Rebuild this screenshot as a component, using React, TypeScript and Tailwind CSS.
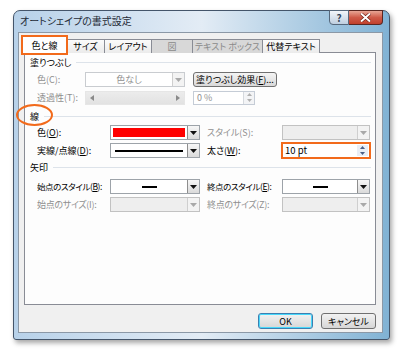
import React from "react";

const U = ({ children }: { children: React.ReactNode }) => <span className="underline underline-offset-1">{children}</span>;

const Tri = ({ color = "#000", up = false, w = 7, h = 4 }: { color?: string; up?: boolean; w?: number; h?: number }) => (
  <svg width={w} height={h} viewBox="0 0 7 4">
    <path d={up ? "M0 4H7L3.5 0Z" : "M0 0H7L3.5 4Z"} fill={color} />
  </svg>
);

function DropBtn({ disabled }: { disabled?: boolean }) {
  return (
    <div
      className={
        disabled
          ? "w-[12px] h-full flex items-center justify-center border-l border-[#cfcfcf] bg-[#f3f3f3]"
          : "w-[12px] h-full flex items-center justify-center border-l border-[#8e8e8e] bg-gradient-to-b from-[#f7f7f7] to-[#dadada]"
      }
    >
      <Tri color={disabled ? "#a9a9a9" : "#111"} />
    </div>
  );
}

function Combo({ w, disabled, children, grayBg }: { w: string; disabled?: boolean; children?: React.ReactNode; grayBg?: boolean }) {
  return (
    <div
      className={
        (grayBg
          ? "bg-[#eeeeee] border-[#c2c2c2] "
          : disabled
          ? "bg-white border-[#c9ccd0] "
          : "bg-white border-[#9da3a9] ") +
        w +
        " h-[15px] border flex items-stretch"
      }
    >
      <div className="flex-1 flex items-center justify-center min-w-0 px-[2px]">{children}</div>
      <DropBtn disabled={disabled || grayBg} />
    </div>
  );
}

function Header({ children, ellipse }: { children: React.ReactNode; ellipse?: boolean }) {
  return (
    <div className="relative flex items-center h-[12px] pl-[5px] text-black">
      <span>{children}</span>
      <div className="flex-1 h-px bg-[#dde3ea] ml-[5px] mr-[4px]" />
      {ellipse && (
        <div className="absolute left-[-9px] top-[-6px] w-[37px] h-[22px] rounded-[50%] border-[2.5px] border-[#f26a1b]" />
      )}
    </div>
  );
}

function Tab({ label, w, selected, disabled }: { label: string; w: string; selected?: boolean; disabled?: boolean }) {
  if (selected) {
    return (
      <div className={w + " relative h-[17px] bg-white border border-b-0 border-[#898c95] flex items-center justify-center text-black z-10"}>
        {label}
        <div className="absolute left-[-2px] top-[-2px] w-[47px] h-[20px] border-2 border-[#f26a1b]" />
      </div>
    );
  }
  return (
    <div
      className={
        w +
        (disabled
          ? " h-[14px] bg-[#d8d8d8] text-[#8a8a8a] "
          : " h-[14px] bg-gradient-to-b from-[#fbfbfb] to-[#ebebeb] text-black ") +
        "border border-b-0 border-l-0 border-[#898c95] flex items-center justify-center"
      }
    >
      {label}
    </div>
  );
}

export default function App() {
  return (
    <div className="w-[400px] h-[354px] bg-white overflow-hidden pt-[10px] pl-[13px] font-['Noto_Sans_CJK_JP','Noto_Sans',sans-serif] [font-feature-settings:'palt'] text-[9px] leading-none whitespace-nowrap">
      <div className="w-[377px] h-[330px] rounded-t-[7px] rounded-b-[3px] border border-[#44556a] bg-gradient-to-r from-[#b7d1e9] via-[#e3ecf5] to-[#80b2d4] shadow-[2px_3px_5px_rgba(0,0,0,0.35)] flex flex-col">
        {/* title bar */}
        <div className="h-[21px] flex items-start">
          <div className="ml-[6px] mt-[5px] text-[10px] text-[#1e2a36]">オートシェイプの書式設定</div>
          <div className="flex-1" />
          <div className="-mt-px flex">
            <div className="w-[20px] h-[15px] rounded-bl-[4px] border border-[#56687c] bg-gradient-to-b from-[#f2f6fa] to-[#bfcfe0] flex items-center justify-center text-[10px] font-bold text-[#34465a]">
              ?
            </div>
            <div className="w-[34px] h-[15px] rounded-br-[4px] border border-l-0 border-[#5a2620] bg-gradient-to-b from-[#e7a595] via-[#cf5a48] to-[#c0402c] flex items-center justify-center mr-[6px]">
              <svg width="11" height="9" viewBox="0 0 11 9">
                <path d="M1 0.5L5.5 4.5L10 0.5M1 8.5L5.5 4.5L10 8.5" stroke="#6a1a10" strokeWidth="3.2" fill="none" />
                <path d="M1 0.5L5.5 4.5L10 0.5M1 8.5L5.5 4.5L10 8.5" stroke="#ffffff" strokeWidth="2" fill="none" />
              </svg>
            </div>
          </div>
        </div>
        {/* client */}
        <div className="ml-[4px] mr-[6px] w-[365px] h-[301px] border border-[#8b98a6] bg-[#f0f0f0] px-[5px] pt-[3px] flex flex-col">
          {/* tabs */}
          <div className="flex items-end h-[17px] -mb-px ml-[-2px] relative z-10">
            <Tab label="色と線" w="w-[45px]" selected />
            <Tab label="サイズ" w="w-[38px]" />
            <Tab label="レイアウト" w="w-[47px]" />
            <Tab label="図" w="w-[41px]" disabled />
            <Tab label="テキスト ボックス" w="w-[70px]" disabled />
            <Tab label="代替テキスト" w="w-[57px]" />
          </div>
          {/* panel */}
          <div className="w-[352px] h-[253px] border border-[#898c95] bg-[#fdfdfd] pt-[3px] flex flex-col">
            <Header>塗りつぶし</Header>
            {/* 色(C) */}
            <div className="flex items-center h-[15px] mt-[4px]">
              <div className="w-[60px] pl-[12px] text-[#8f8f8f]">色(C):</div>
              <Combo w="w-[100px]" disabled>
                <span className="text-[#8f8f8f]">色なし</span>
              </Combo>
              <div className="ml-[8px] w-[84px] h-[15px] rounded-[3px] border border-[#707070] bg-gradient-to-b from-[#f4f4f4] to-[#d9d9d9] flex items-center justify-center text-black">
                塗りつぶし効果(<U>F</U>)...
              </div>
            </div>
            {/* 透過性 */}
            <div className="flex items-center h-[15px] mt-[3px]">
              <div className="w-[60px] pl-[12px] text-[#8f8f8f]">透過性(T):</div>
              <div className="w-[100px] h-[14px] bg-gradient-to-b from-[#ececec] to-[#e2e2e2] border border-[#e6e6e6] flex items-center justify-between px-[4px]">
                <svg width="4" height="6" viewBox="0 0 4 6"><path d="M4 0V6L0 3Z" fill="#8a8a8a" /></svg>
                <svg width="4" height="6" viewBox="0 0 4 6"><path d="M0 0V6L4 3Z" fill="#8a8a8a" /></svg>
              </div>
              <div className="ml-[8px] w-[62px] h-[14px] border border-[#c5ccd6] bg-white flex items-stretch">
                <div className="flex-1 flex items-center pl-[3px] text-[#8f8f8f]">0 %</div>
                <div className="w-[11px] flex flex-col border-l border-[#d5d9de] bg-[#f3f4f6]">
                  <div className="flex-1 flex items-center justify-center"><Tri color="#b0b0b0" up w={5} h={3} /></div>
                  <div className="flex-1 flex items-center justify-center"><Tri color="#b0b0b0" w={5} h={3} /></div>
                </div>
              </div>
            </div>
            <div className="mt-[5px]">
              <Header ellipse>線</Header>
            </div>
            {/* 色(O) */}
            <div className="flex items-center h-[15px] mt-[3px]">
              <div className="w-[85px] pl-[12px] text-black">色(<U>O</U>):</div>
              <Combo w="w-[90px]">
                <div className="w-full h-[9px] bg-[#ff0000]" />
              </Combo>
              <div className="ml-[7px] w-[75px] text-[#8f8f8f]">スタイル(S):</div>
              <Combo w="w-[88px]" grayBg />
            </div>
            {/* 実線 */}
            <div className="flex items-center h-[15px] mt-[3px]">
              <div className="w-[85px] pl-[12px] text-black">実線/点線(<U>D</U>):</div>
              <Combo w="w-[90px]">
                <div className="w-full h-[2px] bg-black mx-[2px]" />
              </Combo>
              <div className="ml-[7px] w-[74px] text-black">太さ(<U>W</U>):</div>
              <div className="w-[90px] h-[17px] border-2 border-[#f26a1b] bg-white flex items-stretch">
                <div className="flex-1 flex items-center pl-[2px] text-black text-[9.5px]">10 pt</div>
                <div className="w-[11px] flex flex-col my-[1px] mr-[1px] bg-[#e9eef6]">
                  <div className="flex-1 flex items-center justify-center"><Tri color="#4a5f86" up w={5} h={3} /></div>
                  <div className="flex-1 flex items-center justify-center"><Tri color="#4a5f86" w={5} h={3} /></div>
                </div>
              </div>
            </div>
            <div className="mt-[3px]">
              <Header>矢印</Header>
            </div>
            {/* 始点のスタイル */}
            <div className="flex items-center h-[15px] mt-[6px]">
              <div className="w-[85px] pl-[12px] text-black text-[8.5px] tracking-[-0.4px]">始点のスタイル(<U>B</U>):</div>
              <Combo w="w-[90px]">
                <div className="w-[15px] h-[2px] bg-black" />
              </Combo>
              <div className="ml-[7px] w-[75px] text-black text-[8.5px] tracking-[-0.4px]">終点のスタイル(<U>E</U>):</div>
              <Combo w="w-[88px]">
                <div className="w-[15px] h-[2px] bg-black" />
              </Combo>
            </div>
            {/* サイズ */}
            <div className="flex items-center h-[15px] mt-[3px]">
              <div className="w-[85px] pl-[12px] text-[#8f8f8f] tracking-[-0.3px]">始点のサイズ(I):</div>
              <Combo w="w-[90px]" grayBg />
              <div className="ml-[7px] w-[75px] text-[#8f8f8f] tracking-[-0.3px]">終点のサイズ(Z):</div>
              <Combo w="w-[88px]" grayBg />
            </div>
          </div>
          {/* buttons */}
          <div className="w-[352px] flex justify-end gap-[8px] mt-[8px]">
            <div className="w-[55px] h-[16px] rounded-[3px] border border-[#3c7fb1] shadow-[inset_0_0_0_1px_#48d8fb] bg-gradient-to-b from-[#f2f2f2] to-[#d6d6d6] flex items-center justify-center text-black">
              OK
            </div>
            <div className="w-[55px] h-[16px] rounded-[3px] border border-[#707070] bg-gradient-to-b from-[#f2f2f2] to-[#d6d6d6] flex items-center justify-center text-black">
              キャンセル
            </div>
          </div>
        </div>
      </div>
    </div>
  );
}
